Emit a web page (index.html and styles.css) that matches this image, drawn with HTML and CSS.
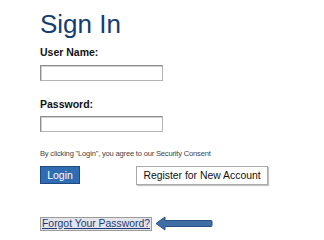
FILE: index.html
```html
<!DOCTYPE html>
<html>
<head>
<meta charset="utf-8">
<link rel="stylesheet" href="styles.css">
</head>
<body>
<div class="page">
  <h1 class="title">Sign In</h1>
  <div class="label label-user">User Name:</div>
  <div class="field field-user"></div>
  <div class="label label-pass">Password:</div>
  <div class="field field-pass"></div>
  <p class="consent">By clicking "Login", you agree to our Security Consent</p>
  <div class="actions">
    <span class="btn-login">Login</span>
    <span class="btn-register">Register for New Account</span>
  </div>
  <div class="forgot-row">
    <a class="forgot" href="#">Forgot Your Password?</a>
    <svg class="arrow" width="58" height="15" viewBox="0 0 58 15">
      <path d="M1 7.5 L10 1 L10 4.5 L56 4.5 Q57 4.5 57 5.5 L57 9.5 Q57 10.5 56 10.5 L10 10.5 L10 14 Z" fill="#3f6ea6" stroke="#2a5184" stroke-width="1" stroke-linejoin="round"/>
    </svg>
  </div>
</div>
</body>
</html>
```
FILE: styles.css
```css
html, body {
  margin: 0;
  padding: 0;
  background: #ffffff;
}
.page {
  padding-left: 40px;
  font-family: "Liberation Sans", Arial, sans-serif;
  color: #000;
}
.title {
  margin: 9px 0 0 0;
  font-size: 26px;
  line-height: 30px;
  font-weight: normal;
  color: #143d74;
}
.label {
  font-size: 10.5px;
  line-height: 14px;
  font-weight: bold;
  color: #111;
}
.label-user {
  margin-top: 6px;
}
.label-pass {
  margin-top: 16px;
}
.field {
  box-sizing: border-box;
  width: 123px;
  height: 16px;
  border: 1px solid #8e8e8e;
  border-right-color: #b4b4b4;
  border-bottom-color: #b4b4b4;
  background: #fff;
  box-shadow: inset 1px 1px 0 #d0d0d0;
}
.field-user {
  margin-top: 6px;
}
.field-pass {
  margin-top: 5px;
}
.consent {
  margin: 17px 0 0 0;
  font-size: 7.6px;
  letter-spacing: -0.2px;
  line-height: 10px;
  color: #444;
}
.actions {
  display: flex;
  align-items: flex-start;
  margin-top: 7px;
  height: 20px;
}
.btn-login {
  box-sizing: border-box;
  width: 40px;
  height: 18px;
  display: flex;
  align-items: center;
  justify-content: center;
  background: #2f6cb1;
  border: 1px solid #1d4a82;
  color: #fff;
  font-size: 10.5px;
}
.btn-register {
  box-sizing: border-box;
  margin-left: 56px;
  width: 132px;
  height: 19px;
  display: flex;
  align-items: center;
  justify-content: center;
  background: #fff;
  border: 1px solid #a9a9a9;
  box-shadow: 1px 1px 1px #c4c4c4;
  color: #111;
  font-size: 10.4px;
}
.forgot-row {
  display: flex;
  align-items: center;
  margin-top: 30px;
  gap: 3px;
}
.forgot {
  box-sizing: border-box;
  height: 14px;
  padding: 0 1px;
  line-height: 12px;
  font-size: 10.4px;
  color: #1c3a78;
  text-decoration: underline;
  background: #e4e5ea;
  border: 1px solid #9c9c9c;
}
.arrow {
  display: block;
}
```
